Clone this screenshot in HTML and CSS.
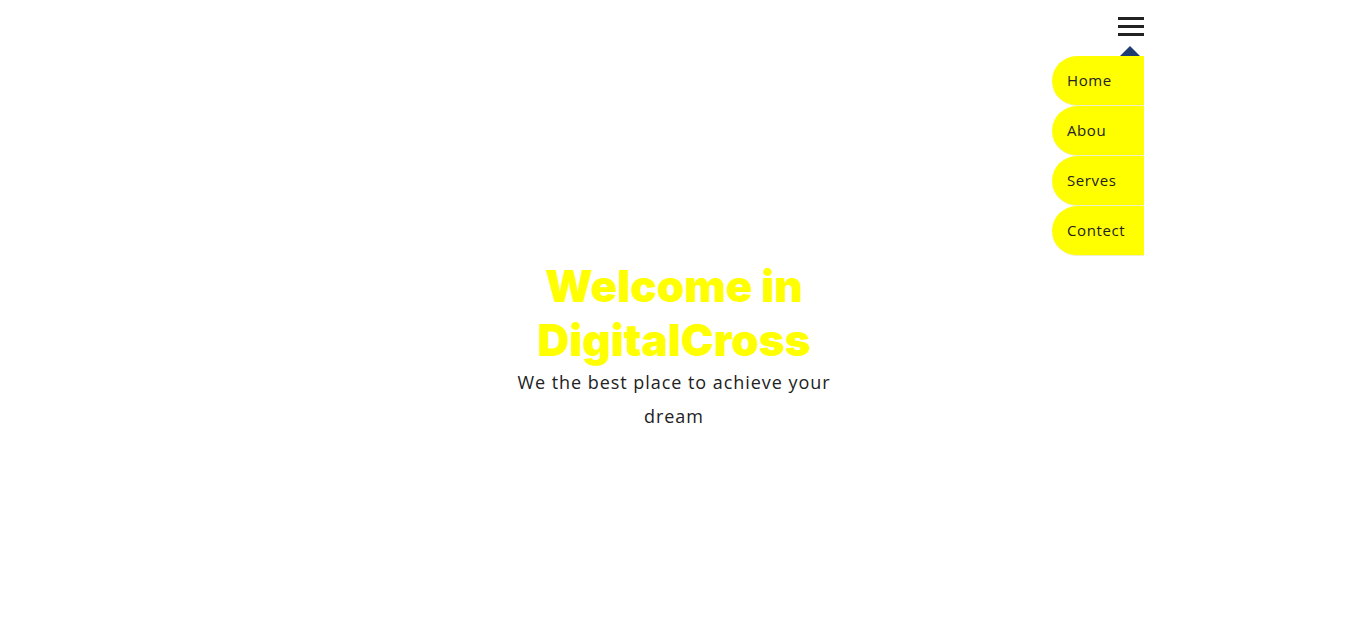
FILE: index.html
```html
<!DOCTYPE html>
<html lang="en">
<head>
<meta charset="utf-8">
<title>DigitalCross</title>
<link rel="stylesheet" href="styles.css">
</head>
<body>
<header class="header">
  <div class="container header-inner">
    <nav class="nav">
      <button class="burger" aria-label="menu">
        <span></span><span></span><span></span>
      </button>
      <ul class="menu">
        <li><a href="#">Home</a></li>
        <li><a href="#">Abou</a></li>
        <li><a href="#">Serves</a></li>
        <li><a href="#">Contect</a></li>
      </ul>
    </nav>
  </div>
</header>
<section class="hero">
  <div class="hero-text">
    <h1>Welcome in DigitalCross</h1>
    <p>We the best place to achieve your dream</p>
  </div>
</section>
</body>
</html>
```
FILE: styles.css
```css
* { box-sizing: border-box; }
body {
  margin: 0;
  font-family: "Open Sans", "Liberation Sans", sans-serif;
  background: #fff;
}
.container {
  width: 940px;
  margin: 0 auto;
}
.header-inner {
  display: flex;
  justify-content: flex-end;
  padding-top: 17px;
}
.nav {
  position: relative;
}
.burger {
  display: flex;
  flex-direction: column;
  gap: 5px;
  width: 26px;
  padding: 0;
  border: 0;
  background: none;
}
.burger span {
  display: block;
  height: 3px;
  width: 26px;
  background: #222;
}
.menu {
  position: absolute;
  right: 0;
  top: 39px;
  margin: 0;
  padding: 0;
  list-style: none;
  width: 92px;
}
.menu::before {
  content: "";
  position: absolute;
  right: 4px;
  top: -10px;
  border-left: 10px solid transparent;
  border-right: 10px solid transparent;
  border-bottom: 10px solid #1f3c72;
}
.menu li {
  height: 50px;
  background: #ffff00;
  border-radius: 25px 0 0 25px;
  border-bottom: 1px solid #eeeec8;
}
.menu a {
  display: flex;
  align-items: center;
  height: 100%;
  padding-left: 15px;
  padding-bottom: 2px;
  color: #222;
  text-decoration: none;
  font-size: 15px;
  letter-spacing: 0.6px;
}
.hero {
  display: flex;
  justify-content: center;
  padding-top: 223px;
}
.hero-text {
  width: 340px;
  text-align: center;
}
.hero h1 {
  margin: 0;
  color: #ffff00;
  font-family: "Inter", sans-serif;
  font-weight: 900;
  font-size: 44px;
  line-height: 54px;
}
.hero p {
  margin: -2px 0 0;
  color: #222;
  font-size: 18px;
  line-height: 34px;
  letter-spacing: 0.95px;
}
```
